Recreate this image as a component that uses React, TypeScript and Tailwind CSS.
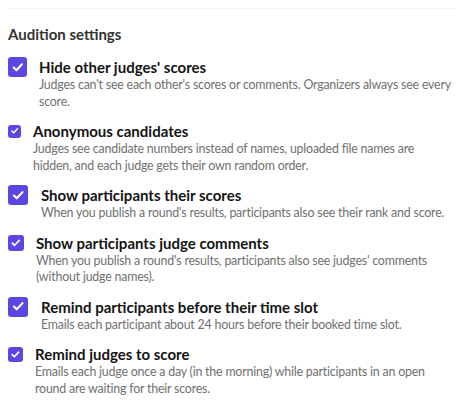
import React from 'react';

type Setting = {
  title: string;
  desc: string;
  box: string;
  gap: string;
  descWidth?: string;
};

const settings: Setting[] = [
  {
    title: "Hide other judges' scores",
    desc: "Judges can't see each other's scores or comments. Organizers always see every score.",
    box: 'w-[19px] h-[20px]',
    gap: 'gap-3',
  },
  {
    title: 'Anonymous candidates',
    desc: 'Judges see candidate numbers instead of names, uploaded file names are hidden, and each judge gets their own random order.',
    box: 'w-[13px] h-[13px]',
    gap: 'gap-3',
    descWidth: 'max-w-[385px]',
  },
  {
    title: 'Show participants their scores',
    desc: "When you publish a round's results, participants also see their rank and score.",
    box: 'w-[20px] h-[20px]',
    gap: 'gap-[13px]',
  },
  {
    title: 'Show participants judge comments',
    desc: "When you publish a round's results, participants also see judges' comments (without judge names).",
    box: 'w-[16px] h-[16px]',
    gap: 'gap-3',
  },
  {
    title: 'Remind participants before their time slot',
    desc: 'Emails each participant about 24 hours before their booked time slot.',
    box: 'w-[20px] h-[20px]',
    gap: 'gap-[13px]',
  },
  {
    title: 'Remind judges to score',
    desc: 'Emails each judge once a day (in the morning) while participants in an open round are waiting for their scores.',
    box: 'w-[15px] h-[15px]',
    gap: 'gap-3',
  },
];

function Check({ box }: { box: string }) {
  return (
    <span className={`${box} shrink-0 rounded-[3px] bg-[#5b48e3] flex items-center justify-center`}>
      <svg viewBox="0 0 16 16" className="w-[72%] h-[72%]" fill="none">
        <path d="M3.2 8.4 6.4 11.5 12.8 4.6" stroke="white" strokeWidth="2.4" strokeLinecap="round" strokeLinejoin="round" />
      </svg>
    </span>
  );
}

export default function App() {
  return (
    <div className="bg-white w-[464px] h-[405px] px-2 pt-2 font-['Lato',sans-serif]">
      <div className="border-t border-[#f0f0f2]" />
      <h2 className="mt-[15px] text-[15px] font-bold text-[#333] leading-5">Audition settings</h2>
      <div className="mt-[13px] flex flex-col gap-[11px]">
        {settings.map((s) => (
          <div key={s.title} className={`flex items-start ${s.gap}`}>
            <div className="h-5 flex items-center">
              <Check box={s.box} />
            </div>
            <div className="min-w-0">
              <div className="text-[15px] font-bold text-[#141414] leading-5">{s.title}</div>
              <div className={`text-[12.4px] tracking-[-0.2px] text-[#707070] leading-[16.5px] ${s.descWidth ?? ''}`}>
                {s.desc}
              </div>
            </div>
          </div>
        ))}
      </div>
    </div>
  );
}
